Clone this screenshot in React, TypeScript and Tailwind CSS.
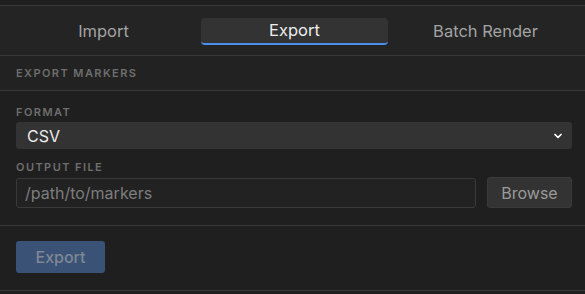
import { ChevronDown } from 'lucide-react';

const font = { fontFamily: '"Inter", "Liberation Sans", sans-serif' };

function Tab({ label, active = false }: { label: string; active?: boolean }) {
  return (
    <div
      className={`w-[187px] h-[27px] flex items-center justify-center text-[16.5px] rounded-[4px] ${
        active ? 'bg-[#333333] text-[#ededed] border-b-2 border-[#4a8ef0]' : 'text-[#a3a3a3]'
      }`}
    >
      {label}
    </div>
  );
}

function Label({ children }: { children: string }) {
  return <div className="text-[11px] font-semibold tracking-[0.13em] text-[#6e6e6e] leading-none">{children}</div>;
}

export default function App() {
  return (
    <div className="w-[585px] h-[294px] bg-[#1f1f1f] overflow-hidden" style={font}>
      <div className="h-[5px]" />
      <div className="h-[51px] border-y border-[#383838] bg-[#242424] flex items-center pl-[10px] gap-[4px] pt-[1px]">
        <Tab label="Import" />
        <Tab label="Export" active />
        <Tab label="Batch Render" />
      </div>
      <div className="h-[35px] border-b border-[#383838] bg-[#222222] flex items-center px-4">
        <Label>EXPORT MARKERS</Label>
      </div>
      <div className="h-[135px] border-b border-[#383838] pl-4 pr-[13px] pt-[16px]">
        <Label>FORMAT</Label>
        <div className="mt-[4px] h-[27px] w-[556px] rounded-[3px] bg-[#333333] flex items-center justify-between pl-[11px] pr-[8px]">
          <span className="text-[16px] text-[#ececec]">CSV</span>
          <ChevronDown className="w-[12px] h-[12px] text-white" strokeWidth={3.5} />
        </div>
        <div className="mt-[13px]">
          <Label>OUTPUT FILE</Label>
        </div>
        <div className="mt-[5px] flex gap-[11px]">
          <div className="w-[460px] h-[30px] shrink-0 rounded-[3px] border border-[#3a3a3a] bg-[#222222] flex items-center pl-[8px] text-[16px] text-[#7d7d7d]">
            /path/to/markers
          </div>
          <div className="w-[85px] h-[31px] shrink-0 -mt-[1px] rounded-[3px] border border-[#3a3a3a] bg-[#333333] flex items-center justify-center text-[16px] text-[#9a9a9a]">
            Browse
          </div>
        </div>
      </div>
      <div className="h-[65px] border-b border-[#383838] px-4 pt-[15px]">
        <div className="w-[89px] h-[32px] rounded-[3px] bg-[#3a5276] flex items-center justify-center text-[16px] font-medium text-[#7f8794]">
          Export
        </div>
      </div>
    </div>
  );
}
